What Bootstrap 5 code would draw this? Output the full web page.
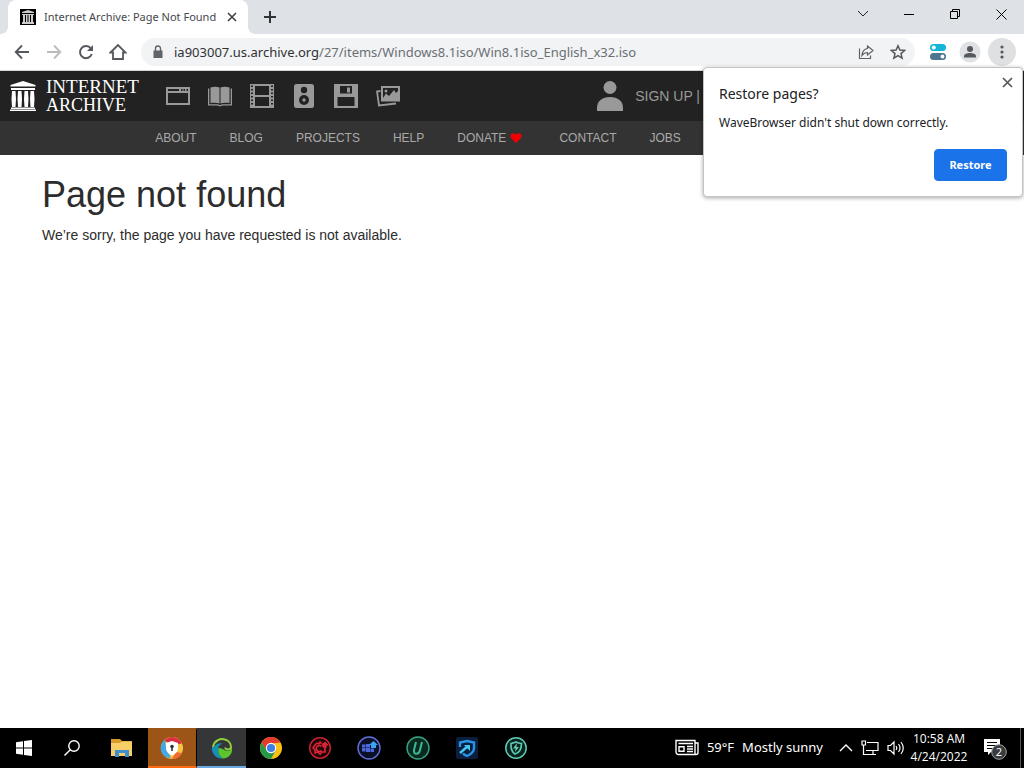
<!DOCTYPE html>
<html lang="en">
<head>
<meta charset="utf-8">
<meta name="viewport" content="width=device-width, initial-scale=1">
<title>Internet Archive: Page Not Found</title>
<link href="https://cdn.jsdelivr.net/npm/bootstrap@5.3.0/dist/css/bootstrap.min.css" rel="stylesheet">
<style>
  :root { --ui: "Noto Sans", "Open Sans", sans-serif; }
  body { font-family: var(--ui); font-size: 14px; background: #fff; }
  svg { display: block; flex: none; }
  button { border: 0; background: none; padding: 0; color: inherit; }
  .center-box { display: flex; align-items: center; justify-content: center; flex: none; }

  .tab-strip { background: #dee1e6; height: 34px; color: #202124; }
  .page-tab { background: #fff; width: 240px; height: 34px; margin-left: 8px; padding: 0 7px 0 12px; border-radius: 8px 8px 0 0; position: relative; }
  .page-tab::before, .page-tab::after { content: ""; position: absolute; bottom: 0; width: 8px; height: 8px; }
  .page-tab::before { left: -8px; background: radial-gradient(circle at 0 0, transparent 8px, #fff 8px); }
  .page-tab::after { right: -8px; background: radial-gradient(circle at 100% 0, transparent 8px, #fff 8px); }
  .tab-title { font-size: 11px; line-height: 16px; color: #45484d; margin-left: 8px; }
  .tab-close { width: 18px; height: 18px; }
  .new-tab { width: 28px; height: 28px; margin-left: 8px; }
  .win-btn { width: 46px; height: 28px; }

  .tool-bar { background: #fff; height: 36px; padding: 0 8px 0 6px; color: #5f6368; }
  .tool-btn { width: 32px; height: 32px; }
  .address-bar { background: #f1f3f4; border-radius: 14px; height: 28px; margin: 0 7px; padding: 0 1px 0 9px; }
  .address-text { font-size: 13px; line-height: 20px; color: #6b6f74; margin-left: 8px; }
  .address-text b { font-weight: 400; color: #303134; }
  .menu-btn { width: 28px; height: 28px; margin-left: 2px; border-radius: 50%; background: #dfe0e2; }

  .archive-top { background: #222; height: 51px; border-top: 1px solid #d5d5d5; color: #999; padding-left: 9px; }
  .archive-top a { color: inherit; text-decoration: none; }
  .wordmark { font-family: "Liberation Serif", serif; color: #fff; font-size: 19px; line-height: 18px; margin-left: 9px; width: 98px; }
  .wordmark .second { font-size: 18px; }
  .media-icons { gap: 18px; margin-left: 22px; }
  .sign-up { font-family: "Liberation Sans", sans-serif; font-size: 14px; margin-right: 324px; }
  .archive-nav { background: #333; height: 34px; font-family: "Liberation Sans", sans-serif; font-size: 12px; gap: 33px; padding-right: 188px; }
  .archive-nav a { color: #aaa; text-decoration: none; }
  .not-found { font-family: "Liberation Sans", sans-serif; color: #2c2c2c; padding: 20px 42px; }
  .not-found h1 { font-size: 36px; line-height: 40px; font-weight: 400; margin: 0 0 10px; }
  .not-found p { font-size: 14px; line-height: 20px; margin: 0; }

  .restore-card { position: absolute; top: 67px; right: 1px; width: 320px; z-index: 5; padding: 15px; border: 1px solid #c4c4c4; border-radius: 4px; background: #fff; box-shadow: 0 1px 4px rgba(0,0,0,.35); color: #202124; }
  .restore-card h2 { font-size: 14px; line-height: 22px; font-weight: 400; margin: 0 0 9px; }
  .restore-card p { font-size: 12px; line-height: 18px; margin: 0 0 17px; }
  .restore-btn { --bs-btn-bg: #1a73e8; --bs-btn-border-color: #1a73e8; width: 73px; height: 32px; font-size: 11px; font-weight: 700; padding: 0; border-radius: 4px; }
  .restore-close { position: absolute; top: 6px; right: 7px; width: 16px; height: 16px; color: #5f6368; }

  .task-bar { background: #000; height: 40px; color: #fff; font-size: 13px; }
  .task-btn { width: 49px; height: 40px; border: 0 solid transparent; border-bottom-width: 2px; border-top-width: 2px; }
  .task-system { width: 48px; }
  .task-pinned { width: 52px; }
  .task-orange { background: #9c5516; border-bottom-color: #ff6a10; border-top-color: #9c5516; border-right: 1px solid #000; }
  .task-grey { background: #343638; border-bottom-color: #69a9e0; border-top-color: #343638; }
  .clock { font-family: "Open Sans", sans-serif; font-size: 12px; line-height: 18px; width: 60px; text-align: center; white-space: nowrap; }
  .notes { width: 52px; border-right: 1px solid #555; margin-right: 3px; height: 40px; }
</style>
</head>
<body class="d-flex flex-column min-vh-100 position-relative">

<header>
  <div class="tab-strip d-flex align-items-center">
    <div class="page-tab d-flex align-items-center">
      <svg width="16" height="16" viewBox="0 0 16 16"><path fill="#000" d="M0 0h16v16H0z"/><path fill="#ccc" d="M8 1l6 2v1H2V3zM2 5h12v1H2zM3 6h2v7H3zM6 6h1.500v7H6zM8.500 6H10v7H8.500zM11 6h2v7h-2zM2 13h12v2H2z"/></svg>
      <span class="tab-title text-nowrap">Internet Archive: Page Not Found</span>
      <button class="tab-close center-box ms-auto" aria-label="Close tab"><svg width="10" height="10" viewBox="0 0 10 10" stroke="#3c4043" stroke-width="1.600"><path d="M1 1l8 8M9 1L1 9"/></svg></button>
    </div>
    <button class="new-tab center-box" aria-label="New tab"><svg width="12" height="12" viewBox="0 0 12 12" stroke="#303236" stroke-width="2"><path d="M6 0v12M0 6h12"/></svg></button>
    <div class="d-flex ms-auto align-self-start">
      <button class="win-btn center-box" aria-label="Search tabs"><svg width="12" height="12" viewBox="0 0 12 12" fill="none" stroke="#222"><path d="M1 3l5 5 5-5"/></svg></button>
      <button class="win-btn center-box" aria-label="Minimize"><svg width="10" height="10" viewBox="0 0 10 10" stroke="#000"><path d="M0 5.500h10"/></svg></button>
      <button class="win-btn center-box" aria-label="Restore down"><svg width="10" height="10" viewBox="0 0 10 10" fill="none" stroke="#000"><path d="M.5 2.500h7v7h-7zM2.500 2.500v-2h7v7h-2"/></svg></button>
      <button class="win-btn center-box" aria-label="Close"><svg width="11" height="11" viewBox="0 0 11 11" stroke="#000"><path d="M.5.500l10 10M10.500.500l-10 10"/></svg></button>
    </div>
  </div>

  <div class="tool-bar d-flex align-items-center">
    <button class="tool-btn center-box" aria-label="Back"><svg width="16" height="16" viewBox="0 0 16 16" fill="none" stroke="#55585c" stroke-width="1.800"><path d="M15 8H2M8 1.500L1.700 8 8 14.500"/></svg></button>
    <button class="tool-btn center-box" aria-label="Forward"><svg width="16" height="16" viewBox="0 0 16 16" fill="none" stroke="#babcbe" stroke-width="1.800"><path d="M1 8h13M8 1.500L14.300 8 8 14.500"/></svg></button>
    <button class="tool-btn center-box" aria-label="Reload"><svg width="16" height="16" viewBox="0 0 16 16"><path d="M13.700 10a6 6 0 1 1-.9-5.500" fill="none" stroke="#55585c" stroke-width="2"/><path d="M15 1v6H9z" fill="#55585c"/></svg></button>
    <button class="tool-btn center-box" aria-label="Home"><svg width="18" height="18" viewBox="0 0 18 18" fill="none" stroke="#55585c" stroke-width="1.800"><path d="M1.500 9.500L9 2l7.500 7.500H14V16H4V9.500z"/></svg></button>
    <div class="address-bar d-flex align-items-center flex-grow-1">
      <svg width="16" height="16" viewBox="0 0 16 16"><path fill="#5f6368" d="M3.500 6.500h9V14h-9z"/><path d="M5.500 7V4.500a2.500 2.500 0 0 1 5 0V7" fill="none" stroke="#5f6368" stroke-width="1.400"/></svg>
      <span class="address-text text-nowrap"><b>ia903007.us.archive.org</b>/27/items/Windows8.1iso/Win8.1iso_English_x32.iso</span>
      <button class="tool-btn center-box ms-auto" aria-label="Share"><svg width="16" height="16" viewBox="0 0 16 16" fill="none" stroke="#5f6368" stroke-width="1.200"><path d="M1.500 4.500v10h11v-3M9.500 2l5.500 4.500L9.500 11V8.500C7 8.500 5.500 9.500 4 11.500c.3-4 2.500-6.500 5.500-7z"/></svg></button>
      <button class="tool-btn center-box" aria-label="Bookmark"><svg width="16" height="16" viewBox="0 0 16 16" fill="none" stroke="#55585c" stroke-width="1.500"><path d="M8 1.800l1.900 4.300 4.700.4L11 9.600l1.100 4.600L8 11.700l-4.100 2.500L5 9.600 1.400 6.500l4.700-.4z"/></svg></button>
    </div>
    <button class="tool-btn center-box" aria-label="Extension"><svg width="16" height="16" viewBox="0 0 16 16"><rect width="16" height="7" rx="3.500" fill="#14b5d8"/><circle cx="3.800" cy="3.500" r="2" fill="#fff"/><rect y="9" width="16" height="7" rx="3.500" fill="#4f7590"/><circle cx="12.500" cy="12.500" r="1.900" fill="#fff"/></svg></button>
    <button class="tool-btn center-box" aria-label="Profile"><svg width="22" height="22" viewBox="0 0 22 22"><circle cx="11" cy="11" r="10.500" fill="#dfe1e5"/><circle cx="11" cy="8" r="3" fill="#55595f"/><path d="M5 16.500v-1.300C5 13 8 12 11 12s6 1 6 3.200v1.300z" fill="#55595f"/></svg></button>
    <button class="menu-btn center-box" aria-label="Menu"><svg width="4" height="14" viewBox="0 0 4 14" fill="#55585c"><circle cx="2" cy="2" r="1.600"/><circle cx="2" cy="7" r="1.600"/><circle cx="2" cy="12" r="1.600"/></svg></button>
  </div>
</header>

<aside class="restore-card" role="dialog" aria-labelledby="restore-title">
  <button class="restore-close center-box" aria-label="Dismiss"><svg width="11" height="11" viewBox="0 0 11 11" stroke="#55585c" stroke-width="1.700"><path d="M1 1l9 9M10 1l-9 9"/></svg></button>
  <h2 id="restore-title">Restore pages?</h2>
  <p>WaveBrowser didn't shut down correctly.</p>
  <button class="btn btn-primary restore-btn d-block ms-auto">Restore</button>
</aside>

<main class="flex-grow-1">
  <div class="archive-top d-flex align-items-center">
    <a href="#" class="d-flex align-items-center">
      <svg width="28" height="32" viewBox="0 0 28 32" fill="#fff"><path d="M14 1l12.500 4v1.500h-25V5zM2 8h24v2H2zM2 27.500h24V29H2zM1 29.500h26V31H1z"/><path d="M3 11h3.500l.5 8-.5 8H3l-.5-8zM9 11h3.500l.5 8-.5 8H9l-.5-8zM15.500 11H19l.5 8-.5 8h-3.500l-.5-8zM21.500 11H25l.5 8-.5 8h-3.500l-.5-8z"/></svg>
      <span class="wordmark d-flex flex-column"><span>INTERNET</span><span class="second">ARCHIVE</span></span>
    </a>
    <nav class="media-icons d-flex" aria-label="Media types">
      <a href="#" aria-label="Web"><svg width="24" height="24" viewBox="0 0 24 24" fill="#999"><path fill-rule="evenodd" d="M0 3h24v18H0zM2 9v10h20V9zM2 5v2h11V5zM15 5v2h1.500V5zM17.500 5v2H19V5zM20.500 5v2H22V5z"/></svg></a>
      <a href="#" aria-label="Texts"><svg width="24" height="24" viewBox="0 0 24 24" fill="#999"><path d="M2.500 3.500C6 2.300 9 2.500 11.500 3.500v16C9 18.500 6 18.500 2.500 19zM12.500 3.500c2.500-1 5.500-1.200 9 0V19c-3.500-.5-6.500-.5-9 .5z"/><path d="M0 4.500h1.300v15.700H10l2 1 2-1h8.700V4.500H24v17H14.500l-2.500 1-2.500-1H0z"/></svg></a>
      <a href="#" aria-label="Video"><svg width="24" height="24" viewBox="0 0 24 24" fill="#999"><path fill-rule="evenodd" d="M0 0h24v24H0zM5 2v9h14V2zM5 13v9h14v-9zM1 1.500V3h2V1.500zM1 5v1.500h2V5zM1 8.500V10h2V8.500zM1 12v1.500h2V12zM1 15.500V17h2v-1.500zM1 19v1.500h2V19zM21 1.500V3h2V1.500zM21 5v1.500h2V5zM21 8.500V10h2V8.500zM21 12v1.500h2V12zM21 15.500V17h2v-1.500zM21 19v1.500h2V19z"/></svg></a>
      <a href="#" aria-label="Audio"><svg width="24" height="24" viewBox="0 0 24 24"><rect x="2" width="20" height="24" rx="2.500" fill="#999"/><circle cx="12" cy="6" r="3.200" fill="#222"/><circle cx="12" cy="16" r="5" fill="#222"/><circle cx="12" cy="16" r="1.700" fill="#999"/></svg></a>
      <a href="#" aria-label="Software"><svg width="24" height="24" viewBox="0 0 24 24"><path fill="#999" d="M0 0h24v24H0z"/><path fill="#222" d="M6 2h12v7.500H6zM3.500 13h17v9h-17z"/><path fill="#999" d="M13 3.500h3v5h-3z"/></svg></a>
      <a href="#" aria-label="Images"><svg width="24" height="24" viewBox="0 0 24 24"><path fill="none" stroke="#999" stroke-width="1.800" d="M4.500 7L1 7.500l2 14 17-2"/><path fill="#999" fill-rule="evenodd" d="M5 2h19v15.500H5zM7 4v10l3-4.500 3 2.500 5-6 2 3 2-2V4z"/><circle cx="10" cy="7" r="1.500" fill="#999"/></svg></a>
    </nav>
    <div class="sign-up d-flex align-items-center ms-auto">
      <svg width="26" height="30" viewBox="0 0 26 30" fill="#999"><circle cx="13" cy="6.500" r="6.500"/><path d="M0 30v-3c0-7 5-11 13-11s13 4 13 11v3z"/></svg>
      <span class="ms-2 ps-1 text-nowrap"><a href="#">SIGN UP</a> |</span>
    </div>
  </div>
  <nav class="archive-nav d-flex align-items-center justify-content-center" aria-label="Site">
    <a href="#">ABOUT</a><a href="#">BLOG</a><a href="#">PROJECTS</a><a href="#">HELP</a>
    <a href="#" class="d-flex align-items-center">DONATE <svg class="ms-1 me-1" width="12" height="12" viewBox="0 0 12 12"><path fill="#f20000" d="M6 11L1.700 6.800C-1 4 1 1.300 3.200 1.300 4.600 1.300 5.500 2.200 6 3c.5-.8 1.400-1.700 2.800-1.700 2.200 0 4.200 2.700 1.500 5.500z"/></svg></a>
    <a href="#">CONTACT</a><a href="#">JOBS</a>
  </nav>
  <section class="not-found">
    <h1>Page not found</h1>
    <p>We’re sorry, the page you have requested is not available.</p>
  </section>
</main>

<footer class="task-bar d-flex align-items-center">
  <button class="task-btn task-system center-box" aria-label="Start"><svg width="16" height="16" viewBox="0 0 16 16" fill="#fff"><path d="M0 2.300L7 1.300v6.200H0zM8 1.100L16 0v7.500H8zM0 8.500h7v6.200l-7-1zM8 8.500h8V16l-8-1.100z"/></svg></button>
  <button class="task-btn task-system center-box" aria-label="Search"><svg width="16" height="16" viewBox="0 0 16 16" fill="none" stroke="#fff" stroke-width="1.400"><circle cx="10" cy="6" r="5.200"/><path d="M6.300 9.700L.5 15.500"/></svg></button>
  <button class="task-btn task-pinned center-box" aria-label="File Explorer"><svg width="22" height="18" viewBox="0 0 22 18"><path fill="#d99b2b" d="M0 0h9l2 2h10v5H0z"/><path fill="#f8cf67" d="M0 4h9l2-1.500h10V17H0z"/><path fill="#3e8fd0" d="M4 11h14v7h-4v-4H8v4H4z"/></svg></button>
  <button class="task-btn task-orange center-box" aria-label="Secure browser"><svg width="24" height="24" viewBox="0 0 24 24"><circle cx="12" cy="12" r="11" fill="#f5c542"/><path fill="#d92f45" d="M4 4.500A11 11 0 0 1 22 7.500L12 9z"/><path fill="#3fa9e8" d="M5 3.500C-1 8-1 17 6 21.300L11 22 6 12z"/><path fill="#f06a38" d="M12 23a11 11 0 0 0 10-6l-6-1z"/><path fill="#fff" d="M12 5l6 2v5c0 4-3 6-6 7.500C9 18 6 16 6 12V7z"/><circle cx="12" cy="10.500" r="1.800" fill="#333"/><path fill="#333" d="M11.200 11h1.600v4h-1.600z"/></svg></button>
  <button class="task-btn task-grey center-box" aria-label="WaveBrowser"><svg width="22" height="22" viewBox="0 0 22 22"><path fill="#1a8fd6" d="M1 10c-1 7 5 12 11 11.500C7 19 6 14 8 11z"/><path fill="#5cc52e" d="M12 21.500c6-.5 10-5 9-11-.5 2-2 3.500-4 3.500-4 0-5-3-9-3-2 4 0 8.500 4 10.500z"/><path fill="none" stroke="#8fd03c" stroke-width="2" d="M2 10C3 4 9 1 14 2.500c4 1 6 4.500 6 7.500 0 3-5 3.500-6 .5"/><path fill="#168fb0" d="M2 12c2-5 6-7 10-5-3 0-5 2-5 6 0 3 1 6 4 8-5-1-9-4-9-9z"/></svg></button>
  <button class="task-btn center-box" aria-label="Chrome"><svg width="22" height="22" viewBox="0 0 22 22"><circle cx="11" cy="11" r="11" fill="#fbc116"/><path fill="#e33b2e" d="M1.500 5.500a11 11 0 0 1 19 0L11 6.500 6.500 13.500z"/><path fill="#229a48" d="M1.500 5.500a11 11 0 0 0 9.500 16.500L15.500 13.500 6.500 13.500z"/><circle cx="11" cy="11" r="5.200" fill="#fff"/><circle cx="11" cy="11" r="4.100" fill="#3d7fe6"/></svg></button>
  <button class="task-btn center-box" aria-label="Driver booster"><svg width="24" height="24" viewBox="0 0 24 24" fill="none" stroke="#d92636"><circle cx="12" cy="12" r="10.300" fill="#280509" stroke-width="1.300"/><path stroke-width="1.600" d="M9 7l2 1 1-2 2 2M7 9l-2 3 2 2v3l3-1 2 2 2-2h3v-6M7 9l2-2M13.500 10.500a3 3 0 1 0 0 4"/><path fill="#d92636" d="M15 11V9h-1l3-3 3 3h-2v3z"/></svg></button>
  <button class="task-btn center-box" aria-label="Software updater"><svg width="24" height="24" viewBox="0 0 24 24"><circle cx="12" cy="12" r="11" fill="#0b1028" stroke="#6170d8" stroke-width="1.400"/><path fill="#4d68dc" d="M5 8.500h3.500v3H5zM9 8h4v3.500H9zM5 12h3.500v3.500H5zM9 12h4v4H9zM13.500 12.500h3.500V16h-3.500z"/><path fill="#35a7ef" d="M14 12V9h-2l4.500-4L21 9h-2v3z"/></svg></button>
  <button class="task-btn center-box" aria-label="Uninstaller"><svg width="24" height="24" viewBox="0 0 24 24" fill="none"><circle cx="12" cy="12" r="11" fill="#092a22" stroke="#39a481" stroke-width="1.400"/><path stroke="#3db890" stroke-width="2" d="M10 6l-2 8c-.8 5 5 5 6 0l2-8"/></svg></button>
  <button class="task-btn center-box" aria-label="Malware fighter"><svg width="24" height="24" viewBox="0 0 24 24"><rect x="1" y="1" width="22" height="22" rx="2" fill="#0b1e3c"/><path fill="none" stroke="#2794e8" stroke-width="2.400" d="M5 11V6.500L12 5l7 1.500V12c0 4-3.500 6.500-7 8-1.500-.7-3-1.500-4-2.600"/><path stroke="#42c6f5" stroke-width="2.400" d="M5 17l8-7"/><path fill="#42c6f5" d="M9 9h6v6z"/></svg></button>
  <button class="task-btn center-box" aria-label="Security"><svg width="24" height="24" viewBox="0 0 24 24" fill="none" stroke="#5fc9b4"><circle cx="12" cy="12" r="10.200" fill="#09231e" stroke-width="1.500"/><path stroke-width="1.700" d="M7 7.500C9 7 10.500 6.500 12 6c1.500.8 3.500 1.300 5.500 1.500 0 5-1 9-6.500 10.500C8 16 6.500 13 7 7.500z"/><path fill="#5fc9b4" stroke="none" d="M13 7l-4 5.500h2.500L11 16l4-5h-2.500z"/></svg></button>

  <div class="d-flex align-items-center ms-auto">
    <svg width="24" height="18" viewBox="0 0 24 18" fill="none" stroke="#fff" stroke-width="1.400"><path d="M1 1.500h19v14H3.500A2.500 2.500 0 0 1 1 13zM20 4h3v9.500a2 2 0 0 1-2 2h-2M3.500 4.500H18M12 7.500h6M12 10h6M12 12.500h6"/><path d="M4 7.700h5v4.600H4z"/></svg>
    <span class="ms-2 text-nowrap">59°F</span><span class="ms-2 text-nowrap">Mostly sunny</span>
    <svg class="ms-3" width="14" height="8" viewBox="0 0 14 8" fill="none" stroke="#fff" stroke-width="1.400"><path d="M1 7l6-6 6 6"/></svg>
    <svg class="ms-2" width="18" height="16" viewBox="0 0 18 16" fill="none" stroke="#fff" stroke-width="1.200"><path d="M6 2.500h11v8H5M2.500 5v9.500H8M12 10.500v4M8 14.500h7M1 1h3.500v4H1z"/></svg>
    <svg class="ms-2" width="18" height="16" viewBox="0 0 18 16" fill="none" stroke="#fff" stroke-width="1.200"><path d="M1 5.500h2.500L7 2v12l-3.500-3.500H1zM9 6q1.500 2 0 4M11.500 4q3 4 0 8M14 2q4.500 6 0 12"/></svg>
    <div class="clock ms-1"><div>10:58 AM</div><div>4/24/2022</div></div>
    <div class="notes center-box"><svg width="24" height="24" viewBox="0 0 24 24"><path fill="#fff" d="M1 3h16v13H8l-3 3v-3H1z"/><path stroke="#000" d="M4 6.500h10M4 9.500h10M4 12.500h7"/><circle cx="16" cy="16" r="7.300" fill="#393c3f" stroke="#a0a0a0"/><text x="16" y="20" text-anchor="middle" font-family="Noto Sans, sans-serif" font-size="11" fill="#fff">2</text></svg></div>
  </div>
</footer>

<script src="https://cdn.jsdelivr.net/npm/bootstrap@5.3.0/dist/js/bootstrap.bundle.min.js"></script>
</body>
</html>
